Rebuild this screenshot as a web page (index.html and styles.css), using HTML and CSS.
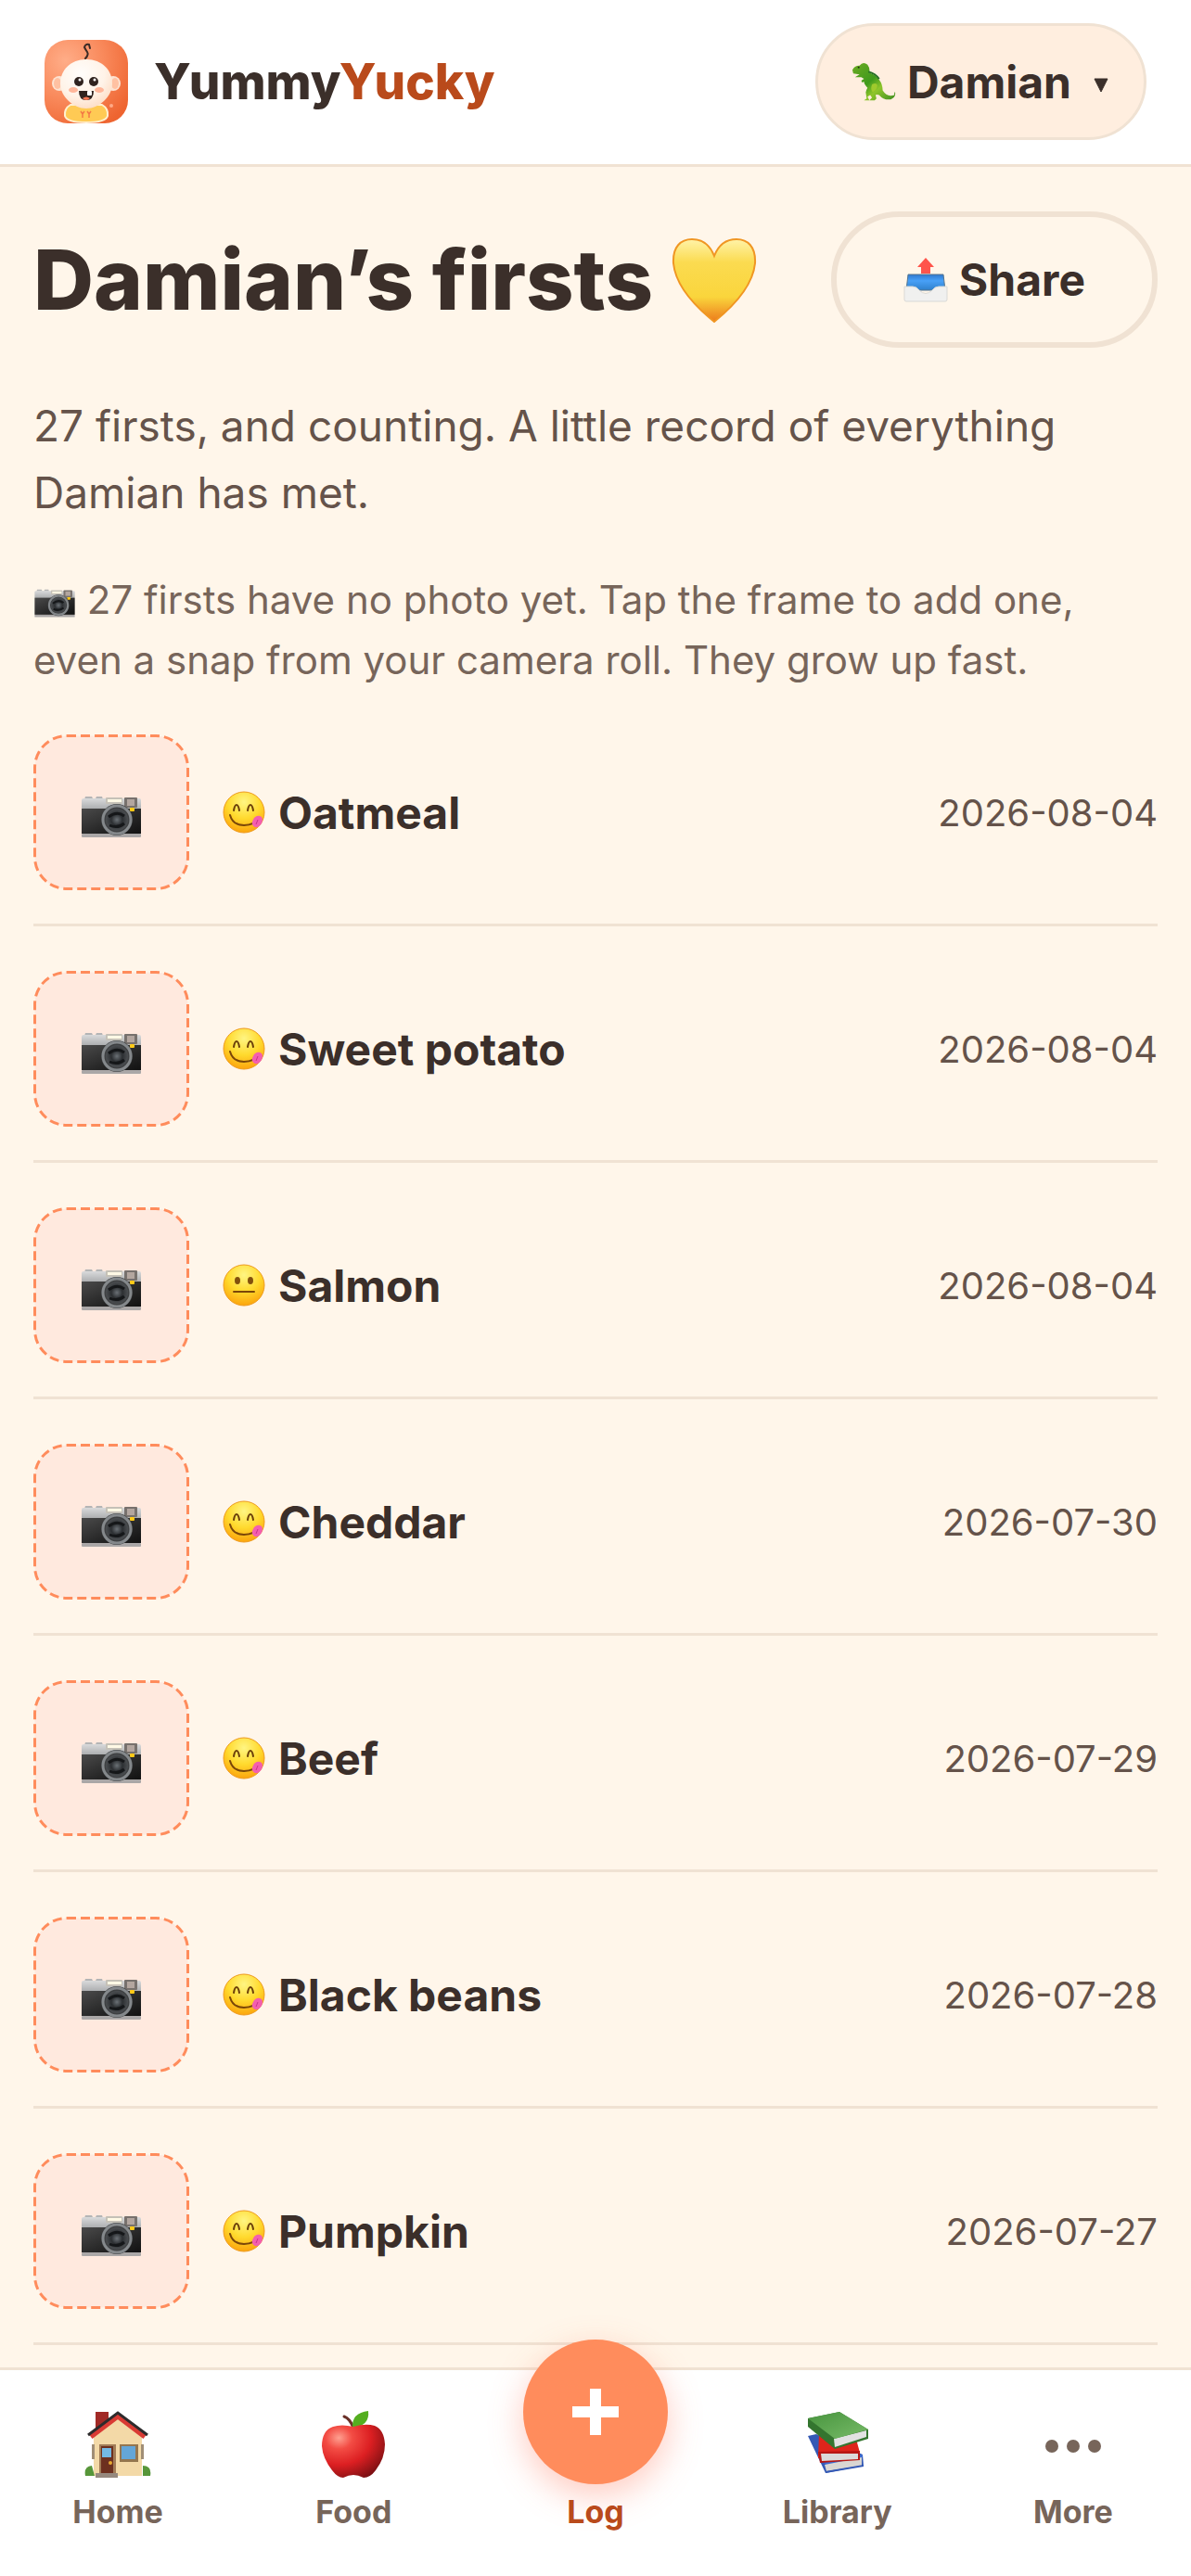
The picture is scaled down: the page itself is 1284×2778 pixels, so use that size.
FILE: index.html
```html
<!DOCTYPE html>
<html lang="en">
<head>
<meta charset="utf-8">
<meta name="viewport" content="width=device-width, initial-scale=1">
<title>YummyYucky</title>
<link rel="stylesheet" href="styles.css">
</head>
<body>
<svg class="sprite" width="0" height="0" aria-hidden="true">
  <defs>
    <linearGradient id="cam-top" x1="0" y1="0" x2="0" y2="1"><stop offset="0" stop-color="#d9dadb"/><stop offset="1" stop-color="#a9abad"/></linearGradient>
    <linearGradient id="cam-body" x1="0" y1="0" x2="1" y2="1"><stop offset="0" stop-color="#4a4a4a"/><stop offset=".6" stop-color="#262626"/><stop offset="1" stop-color="#111"/></linearGradient>
    <radialGradient id="lens"><stop offset="0" stop-color="#6b7176"/><stop offset=".5" stop-color="#2c2f32"/><stop offset="1" stop-color="#4b4e51"/></radialGradient>
    <radialGradient id="face" cx=".5" cy=".25" r=".8"><stop offset="0" stop-color="#fff583"/><stop offset=".5" stop-color="#ffda2e"/><stop offset="1" stop-color="#fb9d08"/></radialGradient>
    <linearGradient id="heart-fill" x1="0" y1="0" x2="0" y2="1"><stop offset="0" stop-color="#fff3a8"/><stop offset=".28" stop-color="#fbdb50"/><stop offset=".7" stop-color="#fad53c"/><stop offset="1" stop-color="#ec7a1c"/></linearGradient>
    <radialGradient id="apple-fill" cx=".27" cy=".25" r=".85"><stop offset="0" stop-color="#ffa090"/><stop offset=".25" stop-color="#f34c44"/><stop offset=".6" stop-color="#dc1f22"/><stop offset="1" stop-color="#7c1013"/></radialGradient>
    <radialGradient id="logo-bg" cx=".25" cy=".25" r=".9"><stop offset="0" stop-color="#ffad88"/><stop offset=".5" stop-color="#f98a5c"/><stop offset="1" stop-color="#ee6430"/></radialGradient>
    <radialGradient id="logo-face" cx=".4" cy=".3" r=".75"><stop offset="0" stop-color="#fffdfb"/><stop offset=".6" stop-color="#fff3e8"/><stop offset="1" stop-color="#fddcc4"/></radialGradient>
    <linearGradient id="dino-fill" x1="0" y1="0" x2="1" y2="1"><stop offset="0" stop-color="#6cab22"/><stop offset=".45" stop-color="#3f9a1c"/><stop offset=".65" stop-color="#8fc52b"/><stop offset="1" stop-color="#3c8c20"/></linearGradient>
    <linearGradient id="tray-blue" x1="0" y1="0" x2="0" y2="1"><stop offset="0" stop-color="#2f78cf"/><stop offset=".4" stop-color="#48a0f7"/><stop offset="1" stop-color="#2f80cb"/></linearGradient>
    <linearGradient id="green-book" x1="0" y1="0" x2="1" y2="1"><stop offset="0" stop-color="#47943e"/><stop offset="1" stop-color="#78bb68"/></linearGradient>

    <symbol id="i-camera" viewBox="6 4 68 64">
      <path fill="#b4b5b6" d="M11 21l1-3h7l1 2h3l1-2h6l1 3z"/>
      <rect x="8" y="20" width="64" height="12" rx="2" fill="url(#cam-top)"/>
      <rect x="8" y="31" width="64" height="27" fill="url(#cam-body)"/>
      <rect x="8" y="58" width="64" height="4" rx="1" fill="#aaa7a7"/>
      <rect x="34" y="19" width="18" height="7" rx="1" fill="#c5c1b7"/><rect x="36" y="21" width="15" height="3" fill="#fff9e5"/>
      <rect x="54" y="19" width="14" height="11" rx="1" fill="#77716d"/><rect x="57" y="21" width="8" height="7" fill="#b3a69f"/>
      <circle cx="46" cy="43" r="17" fill="#3e4042"/><circle cx="46" cy="43" r="15" fill="none" stroke="#84888b" stroke-width="3"/>
      <circle cx="46" cy="43" r="12" fill="url(#lens)"/>
      <path d="M37 40q9-7 17-1M38 49q9 4 16-2" stroke="#151719" stroke-width="3" fill="none"/>
      <rect x="60" y="30" width="5" height="4" rx="1" fill="#ffc917"/>
    </symbol>
    <symbol id="i-photo" viewBox="0 0 168 168">
      <rect x="1.5" y="1.5" width="165" height="165" rx="34.5" fill="#ffe9de" stroke="#ff8c5c" stroke-width="3" stroke-dasharray="10 5"/>
      <use href="#i-camera" x="50" y="53" width="68" height="64"/>
    </symbol>
    <symbol id="i-yum" viewBox="0 0 46 46">
      <circle cx="23" cy="23" r="22" fill="url(#face)" stroke="#ee9a1b"/>
      <path d="M12 21q1-6 3-6t3 6M27 21q1-6 3-6t3 6" fill="none" stroke="#6b3f09" stroke-width="2" stroke-linecap="round"/>
      <path d="M8 26q3 11 15 11t15-9" fill="none" stroke="#7a4608" stroke-width="2" stroke-linecap="round"/>
      <path d="M34 29q4-4 8-1q2 3 0 7q-3 5-7 4q-4-2-3-6z" fill="#f35faf"/><path d="M38 31l-2 5" stroke="#cb328a" stroke-width="1"/>
    </symbol>
    <symbol id="i-neutral" viewBox="0 0 46 46">
      <circle cx="23" cy="23" r="22" fill="url(#face)" stroke="#ee9a1b"/>
      <ellipse cx="16" cy="18" rx="3" ry="4" fill="#82500d"/><ellipse cx="30" cy="18" rx="3" ry="4" fill="#82500d"/>
      <path d="M12 30h22" stroke="#7a4608" stroke-width="2" stroke-linecap="round"/>
    </symbol>
  </defs>
</svg>

<header class="topbar">
  <a class="brand" href="#">
    <svg class="brand-logo" viewBox="0 0 90 90" aria-hidden="true">
      <rect width="90" height="90" rx="25" fill="url(#logo-bg)"/>
      <path d="M44 20q4-4 2-7t-3-5q1-4 5-3l1 4" fill="none" stroke="#3b2b26" stroke-width="2" stroke-linecap="round"/>
      <circle cx="16" cy="47" r="8" fill="#fde3d2"/><circle cx="74" cy="47" r="8" fill="#fde3d2"/>
      <ellipse cx="14" cy="47" rx="4" ry="6" fill="#ffc1a2"/><ellipse cx="76" cy="47" rx="4" ry="6" fill="#ffc1a2"/>
      <path d="M28 70h34q7 4 6 12q-2 7-23 7t-23-7q-1-8 6-12z" fill="#ffca54" stroke="#fff0cf" stroke-width="2"/>
      <path d="M45 21c17 0 28 12 28 26S59 74 45 74 17 61 17 47s11-26 28-26z" fill="url(#logo-face)"/>
      <circle cx="37" cy="45" r="5" fill="#30231f"/><circle cx="53" cy="45" r="5" fill="#30231f"/>
      <circle cx="38" cy="43" r="1.5" fill="#fff"/><circle cx="54" cy="43" r="1.5" fill="#fff"/>
      <ellipse cx="31" cy="54" rx="5" ry="3" fill="#ffb79b"/><ellipse cx="59" cy="54" rx="5" ry="3" fill="#ffb79b"/>
      <path d="M37 55h16q0 10-8 10t-8-10z" fill="#30231f"/><rect x="46" y="55" width="5" height="5" rx="1" fill="#fff"/><path d="M41 63q4-3 8 0q-4 4-8 0z" fill="#f97755"/>
      <path d="M39 77l2 3 2-3M41 80v4M46 77l2 3 2-3M48 80v4" fill="none" stroke="#f37945" stroke-width="1.500"/>
      <circle cx="72" cy="71" r="2" fill="#ffa986"/>
    </svg>
    <span class="brand-name">Yummy<span class="brand-accent">Yucky</span></span>
  </a>
  <button class="child-switch" type="button">
    <svg class="child-icon" viewBox="0 0 50 44" aria-hidden="true">
      <path d="M1 9Q3 4 9 4Q13-1 18 3Q21 7 20 12Q28 15 31 20Q35 25 35 32Q40 40 48 37Q48 33 49 34Q50 40 44 42Q36 43 31 37Q28 36 27 37L28 41L26 43H20L23 40L21 37L18 39L20 43H14L17 41L16 34Q17 30 18 29Q14 25 14 22L12 23L11 21L14 19L11 17L4 17L9 14L2 13Z" fill="url(#dino-fill)"/>
      <path d="M23 25q5-2 6 1q0 5-5 8q-3-3-1-9z" fill="#9fca2d"/><circle cx="8" cy="6" r="1" fill="#20270f"/><path d="M19 11q8 2 12 8" stroke="#246e24" stroke-width="2" fill="none"/>
    </svg>
    <span>Damian</span>
    <svg class="child-caret" viewBox="0 0 16 16" aria-hidden="true"><path d="M1 1h14L8 15z" fill="#3b2f2a" stroke="#3b2f2a" stroke-linejoin="round"/></svg>
  </button>
</header>

<main class="content">
  <div class="title-row">
    <h1 class="title">Damian’s firsts
      <svg class="title-heart" viewBox="0 0 92 92" aria-hidden="true"><path d="M46 91Q5 58 2 28C1 10 10 2 22 2Q39 2 46 20Q53 2 70 2C82 2 91 10 90 28Q87 58 46 91Z" fill="url(#heart-fill)" stroke="#f09623" stroke-width="2"/></svg>
    </h1>
    <button class="share" type="button">
      <svg class="share-icon" viewBox="0 0 48 48" aria-hidden="true">
        <path d="M24 0l9 10h-4v7H19v-7h-4z" fill="#ff544b"/>
        <path d="M5 18h38l2 17H3z" fill="url(#tray-blue)" stroke="#56748c" stroke-width="1"/>
        <path d="M1 31h9q4 0 7 4q7 7 14 0q3-4 7-4h9v14q0 2-2 2H3q-2 0-2-2z" fill="#f0f0ef" stroke="#d9d9d6" stroke-width="1"/>
      </svg>
      <span>Share</span>
    </button>
  </div>
  <p class="lead">27 firsts, and counting. A little record of everything Damian has met.</p>
  <p class="hint"><svg class="hint-icon" aria-hidden="true"><use href="#i-camera"/></svg> 27 firsts have no photo yet. Tap the frame to add one, even a snap from your camera roll. They grow up fast.</p>

  <ul class="firsts">
    <li class="first"><button class="photo" type="button" aria-label="Add photo of Oatmeal"><svg class="photo-frame"><use href="#i-photo"/></svg></button><span class="food"><svg class="mood"><use href="#i-yum"/></svg>Oatmeal</span><time class="date">2026-08-04</time></li>
    <li class="first"><button class="photo" type="button" aria-label="Add photo of Sweet potato"><svg class="photo-frame"><use href="#i-photo"/></svg></button><span class="food"><svg class="mood"><use href="#i-yum"/></svg>Sweet potato</span><time class="date">2026-08-04</time></li>
    <li class="first"><button class="photo" type="button" aria-label="Add photo of Salmon"><svg class="photo-frame"><use href="#i-photo"/></svg></button><span class="food"><svg class="mood"><use href="#i-neutral"/></svg>Salmon</span><time class="date">2026-08-04</time></li>
    <li class="first"><button class="photo" type="button" aria-label="Add photo of Cheddar"><svg class="photo-frame"><use href="#i-photo"/></svg></button><span class="food"><svg class="mood"><use href="#i-yum"/></svg>Cheddar</span><time class="date">2026-07-30</time></li>
    <li class="first"><button class="photo" type="button" aria-label="Add photo of Beef"><svg class="photo-frame"><use href="#i-photo"/></svg></button><span class="food"><svg class="mood"><use href="#i-yum"/></svg>Beef</span><time class="date">2026-07-29</time></li>
    <li class="first"><button class="photo" type="button" aria-label="Add photo of Black beans"><svg class="photo-frame"><use href="#i-photo"/></svg></button><span class="food"><svg class="mood"><use href="#i-yum"/></svg>Black beans</span><time class="date">2026-07-28</time></li>
    <li class="first"><button class="photo" type="button" aria-label="Add photo of Pumpkin"><svg class="photo-frame"><use href="#i-photo"/></svg></button><span class="food"><svg class="mood"><use href="#i-yum"/></svg>Pumpkin</span><time class="date">2026-07-27</time></li>
  </ul>
</main>

<nav class="tabbar">
  <a class="tab" href="#">
    <svg class="tab-icon" viewBox="0 0 72 72" aria-hidden="true">
      <path d="M12 1h14v12L12 24z" fill="#a12a26"/><path d="M10 27L36 5l26 22v43H10z" fill="#f3d9a7"/>
      <path d="M8 36h3v16H8zM61 36h3v16h-3z" fill="#a08e76"/>
      <path d="M7 28L36 6l29 22" fill="none" stroke="#d93b34" stroke-width="5"/><path d="M4 26L36 2l32 24" fill="none" stroke="#2d2b2c" stroke-width="3"/>
      <rect x="16" y="36" width="18" height="32" fill="#a17c57"/><rect x="18" y="38" width="13" height="29" fill="#6d301f"/><rect x="19" y="40" width="10" height="10" fill="#74b9e4"/><circle cx="28" cy="56" r="2" fill="#e8a932"/>
      <rect x="38" y="36" width="20" height="19" fill="#94764f"/><rect x="40" y="38" width="15" height="14" fill="#64a6d8"/>
      <path d="M1 70q-2-10 7-11l3 11zM71 70q2-11-8-11v11z" fill="#57963a"/><path d="M12 67h24v5H12z" fill="#96897e"/>
    </svg>
    <span>Home</span>
  </a>
  <a class="tab" href="#">
    <svg class="tab-icon" viewBox="0 0 72 72" aria-hidden="true">
      <path d="M36 18Q32 8 26 6" stroke="#6a3128" stroke-width="3" fill="none" stroke-linecap="round"/><path d="M35 18Q34 2 52 0Q54 16 35 18z" fill="#54ae20"/>
      <path d="M36 17q13-4 23-1q10 4 11 20q0 15-10 28q-6 8-13 8q-6-3-11-3t-11 3q-6 0-12-8Q3 51 2 38q0-17 12-21q9-3 22 0z" fill="url(#apple-fill)"/>
    </svg>
    <span>Food</span>
  </a>
  <a class="tab tab-log" href="#">
    <span class="fab"><svg class="fab-icon" viewBox="0 0 50 50" aria-hidden="true"><path d="M25 0v50M0 25h50" stroke="#fff" stroke-width="12"/></svg></span>
    <span>Log</span>
  </a>
  <a class="tab" href="#">
    <svg class="tab-icon" viewBox="0 0 72 72" aria-hidden="true">
      <path d="M4 27l19 40 41-8-1-12-50-22z" fill="#3459b5"/><path d="M21 56l42-9v3L24 58z" fill="#3d6bd0"/><path d="M22 58l40-8v9l-38 6z" fill="#d9d6d2"/><path d="M23 65l41-7v2l-41 7z" fill="#3459b5"/>
      <path d="M16 25l38-2 6 22-45 6z" fill="#df241b"/><path d="M15 44l45-1v10l-43 3z" fill="#b81714"/><path d="M18 46h40v6l-39 2z" fill="#dcdad9"/>
      <path d="M4 8L38 1l31 19v10L33 41 4 17z" fill="#34752f"/><path d="M32 30l35-9v7L33 39z" fill="#e2e2e2"/><path d="M4 8L38 1l31 19-36 10z" fill="url(#green-book)"/>
    </svg>
    <span>Library</span>
  </a>
  <a class="tab" href="#">
    <svg class="tab-icon" viewBox="0 0 72 72" aria-hidden="true"><g fill="#77655a"><circle cx="13" cy="38" r="7"/><circle cx="36" cy="38" r="7"/><circle cx="59" cy="38" r="7"/></g></svg>
    <span>More</span>
  </a>
</nav>
</body>
</html>
```

FILE: styles.css
```css
:root {
  --ink: #3b2f2a;
  --ink-soft: #65534a;
  --ink-muted: #77655a;
  --line: #f0e2d3;
  --cream: #fff6ea;
  --coral: #ff8c5c;
  --rust: #b94a1b;
}

* { box-sizing: border-box; }

body {
  margin: 0;
  min-height: 100vh;
  display: flex;
  flex-direction: column;
  background: var(--cream);
  color: var(--ink);
  font-family: Inter, "Liberation Sans", sans-serif;
  font-size: 48px;
}

button { font: inherit; color: inherit; cursor: pointer; }
a { color: inherit; text-decoration: none; }
.sprite { position: absolute; }

.topbar {
  display: flex;
  align-items: center;
  justify-content: space-between;
  padding: 25px 48px 26px;
  background: #fff;
  border-bottom: 3px solid var(--line);
}

.brand { display: flex; align-items: center; gap: 28px; }
.brand-logo { width: 90px; height: 90px; }
.brand-name { font-size: 53px; font-weight: 800; }
.brand-accent { color: var(--rust); }

.child-switch {
  display: flex;
  align-items: center;
  height: 126px;
  padding: 0 38px 0 36px;
  border: 3px solid var(--line);
  border-radius: 63px;
  background: #ffeedf;
  font-weight: 700;
}
.child-icon { width: 48px; height: 44px; margin-right: 12px; }
.child-caret { width: 16px; height: 16px; margin: 8px 0 0 24px; }

.content { flex: 1; padding: 48px 36px 24px; }

.title-row { display: flex; align-items: center; justify-content: space-between; }
.title {
  display: flex;
  align-items: center;
  gap: 20px;
  margin: 0;
  font-size: 90px;
  font-weight: 800;
  line-height: 108px;
}
.title-heart { width: 92px; height: 92px; }

.share {
  display: flex;
  align-items: center;
  gap: 12px;
  height: 147px;
  padding: 0 72px;
  border: 6px solid var(--line);
  border-radius: 74px;
  background: transparent;
  font-weight: 700;
}
.share-icon { width: 48px; height: 48px; }

.lead { margin: 48px 0 0; color: var(--ink-soft); font-size: 46px; line-height: 72px; }
.hint { margin: 47px 0 0; color: var(--ink-muted); font-size: 42px; line-height: 65px; }
.hint-icon { width: 46px; height: 44px; vertical-align: -8px; }

.firsts { margin: 0; padding: 0; list-style: none; }
.first {
  display: flex;
  align-items: center;
  gap: 36px;
  padding: 48px 0 36px;
  border-bottom: 3px solid var(--line);
}
.photo {
  display: block;
  width: 168px;
  height: 168px;
  padding: 0;
  border: 0;
  border-radius: 36px;
  background: transparent;
}
.photo-frame { display: block; width: 100%; height: 100%; }
.food { flex: 1; display: flex; align-items: center; gap: 14px; font-weight: 700; }
.mood { width: 46px; height: 46px; }
.date { color: var(--ink-soft); font-size: 40px; }

.tabbar {
  position: sticky;
  bottom: 0;
  display: grid;
  grid-template-columns: 254fr 254fr 267fr 254fr 254fr;
  padding-bottom: 48px;
  background: #fff;
  border-top: 3px solid var(--line);
}
.tab {
  display: flex;
  flex-direction: column;
  align-items: center;
  justify-content: flex-end;
  gap: 16px;
  color: var(--ink-muted);
  font-size: 34px;
  font-weight: 700;
  line-height: 42px;
}
.tab-icon { width: 72px; height: 72px; margin-top: 44px; }
.tab-log { gap: 9px; color: var(--rust); }
.fab {
  display: grid;
  place-items: center;
  width: 156px;
  height: 156px;
  margin-top: -33px;
  border-radius: 50%;
  background: var(--coral);
  box-shadow: 0 12px 36px rgba(255, 107, 74, .35);
}
.fab-icon { width: 50px; height: 50px; }
```
